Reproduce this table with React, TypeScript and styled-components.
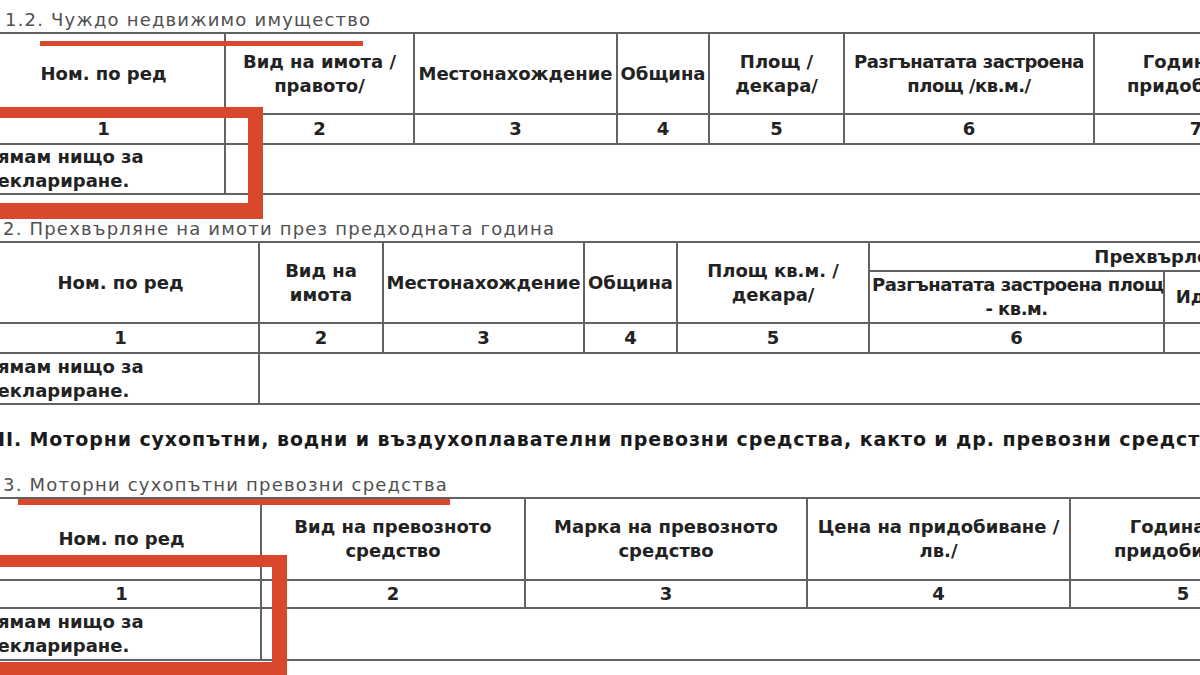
import React from "react";
import styled, { createGlobalStyle } from "styled-components";

const Global = createGlobalStyle`
  html, body { margin: 0; padding: 0; background: #ffffff; }
  body {
    width: 1200px;
    height: 675px;
    overflow: hidden;
    font-family: "DejaVu Sans", Verdana, sans-serif;
  }
`;

const Page = styled.div`
  position: relative;
  width: 1200px;
  height: 675px;
  overflow: hidden;
  padding-top: 8px;
  box-sizing: border-box;
  display: flex;
  flex-direction: column;
  background: #ffffff;
`;

const Title = styled.div<{ $indent: number; $gap: number }>`
  flex: none;
  margin-top: ${(p) => p.$gap}px;
  padding-left: ${(p) => p.$indent}px;
  height: 24px;
  line-height: 24px;
  font-size: 18px;
  letter-spacing: 1.2px;
  color: #505050;
  white-space: nowrap;
`;

const Heading = styled.div`
  flex: none;
  margin-top: 22px;
  margin-left: -10px;
  height: 24px;
  line-height: 24px;
  font-size: 19px;
  letter-spacing: 0.9px;
  font-weight: bold;
  color: #1a1a1a;
  white-space: nowrap;
`;

const Table = styled.table<{ $width: number }>`
  flex: none;
  width: ${(p) => p.$width}px;
  margin-left: -19px;
  border-collapse: collapse;
  table-layout: fixed;
  font-size: 18px;
  font-weight: bold;
  color: #222222;
`;

const Cell = styled.td<{ $align?: "left" | "center"; $tight?: boolean }>`
  border: 2px solid #626262;
  padding: 0 ${(p) => (p.$align === "left" ? "2px 0 0" : "2px")};
  text-align: ${(p) => p.$align ?? "center"};
  vertical-align: middle;
  line-height: 24px;
  font-weight: bold;
  white-space: nowrap;
  letter-spacing: ${(p) => (p.$tight ? "-0.5px" : "0")};
  overflow: hidden;
`;

const Row = styled.tr<{ $h: number }>`
  height: ${(p) => p.$h}px;
`;

const Mark = styled.div`
  position: absolute;
  background: #d9482c;
  pointer-events: none;
`;

const Frame = styled.div<{ $t: number; $r: number; $b: number }>`
  position: absolute;
  box-sizing: border-box;
  border-style: solid;
  border-color: #d9482c;
  border-width: ${(p) => p.$t}px ${(p) => p.$r}px ${(p) => p.$b}px 0;
  pointer-events: none;
`;

const Cols: React.FC<{ widths: number[] }> = ({ widths }) => (
  <colgroup>
    {widths.map((w, i) => (
      <col key={i} style={{ width: w }} />
    ))}
  </colgroup>
);

const sum = (a: number[]) => a.reduce((x, y) => x + y, 0);

const t1 = [243, 189, 203, 92, 135, 250, 204];
const t2 = [277, 124, 201, 93, 192, 295, 180, 183];
const t3 = [279, 264, 282, 263, 226];

const Nothing = () => (
  <>
    Нямам нищо за
    <br />
    деклариране.
  </>
);

export default function App() {
  return (
    <>
      <Global />
      <Page>
        <Title $indent={5} $gap={0}>
          1.2. Чуждо недвижимо имущество
        </Title>
        <Table $width={sum(t1)}>
          <Cols widths={t1} />
          <tbody>
            <Row $h={81}>
              <Cell>Ном. по ред</Cell>
              <Cell>
                Вид на имота /<br />
                правото/
              </Cell>
              <Cell>Местонахождение</Cell>
              <Cell>Община</Cell>
              <Cell>
                Площ /<br />
                декара/
              </Cell>
              <Cell $tight>
                Разгънатата застроена
                <br />
                площ /кв.м./
              </Cell>
              <Cell>
                Година на
                <br />
                придобиване
              </Cell>
            </Row>
            <Row $h={30}>
              {[1, 2, 3, 4, 5, 6, 7].map((n) => (
                <Cell key={n}>{n}</Cell>
              ))}
            </Row>
            <Row $h={50}>
              <Cell $align="left">
                <Nothing />
              </Cell>
              <Cell colSpan={6} />
            </Row>
          </tbody>
        </Table>

        <Title $indent={3} $gap={22}>
          2. Прехвърляне на имоти през предходната година
        </Title>
        <Table $width={sum(t2)}>
          <Cols widths={t2} />
          <tbody>
            <Row $h={29}>
              <Cell rowSpan={2}>Ном. по ред</Cell>
              <Cell rowSpan={2}>
                Вид на
                <br />
                имота
              </Cell>
              <Cell rowSpan={2}>Местонахождение</Cell>
              <Cell rowSpan={2}>Община</Cell>
              <Cell rowSpan={2}>
                Площ кв.м. /<br />
                декара/
              </Cell>
              <Cell colSpan={3}>Прехвърлени права</Cell>
            </Row>
            <Row $h={52}>
              <Cell $tight>
                Разгънатата застроена площ
                <br />- кв.м.
              </Cell>
              <Cell>Идеални части</Cell>
              <Cell>
                Година на
                <br />
                прехвърляне
              </Cell>
            </Row>
            <Row $h={30}>
              {[1, 2, 3, 4, 5, 6, 7, 8].map((n) => (
                <Cell key={n}>{n}</Cell>
              ))}
            </Row>
            <Row $h={51}>
              <Cell $align="left">
                <Nothing />
              </Cell>
              <Cell colSpan={7} />
            </Row>
          </tbody>
        </Table>

        <Heading>
          III. Моторни сухопътни, водни и въздухоплавателни превозни средства, както и др. превозни средства
        </Heading>

        <Title $indent={3} $gap={22}>
          3. Моторни сухопътни превозни средства
        </Title>
        <Table $width={sum(t3)}>
          <Cols widths={t3} />
          <tbody>
            <Row $h={82}>
              <Cell>Ном. по ред</Cell>
              <Cell>
                Вид на превозното
                <br />
                средство
              </Cell>
              <Cell>
                Марка на превозното
                <br />
                средство
              </Cell>
              <Cell>
                Цена на придобиване /<br />
                лв./
              </Cell>
              <Cell>
                Година на
                <br />
                придобиване
              </Cell>
            </Row>
            <Row $h={28}>
              {[1, 2, 3, 4, 5].map((n) => (
                <Cell key={n}>{n}</Cell>
              ))}
            </Row>
            <Row $h={52}>
              <Cell $align="left">
                <Nothing />
              </Cell>
              <Cell colSpan={4} />
            </Row>
          </tbody>
        </Table>

        <Mark style={{ left: 40, top: 41, width: 323, height: 5 }} />
        <Frame $t={11} $r={15} $b={16} style={{ left: -20, top: 107, width: 283, height: 112 }} />
        <Mark style={{ left: 18, top: 499, width: 432, height: 6 }} />
        <Frame $t={12} $r={15} $b={15} style={{ left: -20, top: 555, width: 307, height: 122 }} />
      </Page>
    </>
  );
}
